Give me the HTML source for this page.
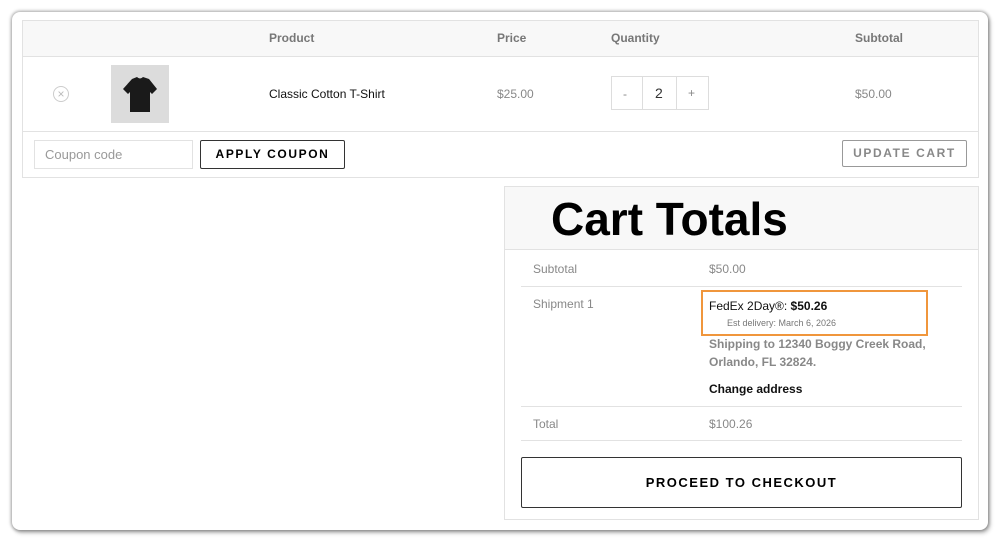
<!DOCTYPE html><html><head><style>
body{margin:0;width:1000px;height:541px;background:#fff;font-family:"Liberation Sans",sans-serif;position:relative;overflow:hidden}
.a{position:absolute}
.card{left:12px;top:12px;width:976px;height:518px;background:#fff;border-radius:8px;box-shadow:0 0 3px 1px rgba(0,0,0,.35),2px 3px 4px rgba(0,0,0,.25)}
.g{color:#888;font-size:12px}
.h{color:#777;font-size:12px;font-weight:bold}
</style></head><body>
<div class="a card"></div>
<div class="a" style="left:22px;top:20px;width:955px;height:156px;border:1px solid #e2e2e2"></div>
<div class="a" style="left:23px;top:21px;width:955px;height:35px;background:#f8f8f8;border-bottom:1px solid #e2e2e2"></div>
<div class="a h" style="left:269px;top:31px">Product</div>
<div class="a h" style="left:497px;top:31px">Price</div>
<div class="a h" style="left:611px;top:31px">Quantity</div>
<div class="a h" style="left:855px;top:31px">Subtotal</div>
<div class="a" style="left:23px;top:131px;width:955px;border-top:1px solid #e2e2e2"></div>
<div class="a" style="left:53px;top:86px;width:14px;height:14px;border:1px solid #ccc;border-radius:50%;color:#bbb;font-size:12px;line-height:14px;text-align:center">×</div>
<div class="a" style="left:111px;top:65px;width:58px;height:58px;background:#dcdcdc"><svg width="58" height="58"><path d="M21 14 L26 12 Q29 15 32 12 L38 14 L46 24 L41 29 L39 27 L39 47 L19 47 L19 27 L17 29 L12 24 Z" fill="#1a1a1a"/></svg></div>
<div class="a" style="left:269px;top:87px;font-size:12px;color:#111">Classic Cotton T-Shirt</div>
<div class="a g" style="left:497px;top:87px">$25.00</div>
<div class="a" style="left:611px;top:76px;width:96px;height:32px;border:1px solid #ddd"></div>
<div class="a" style="left:642px;top:77px;width:33px;height:32px;border-left:1px solid #ddd;border-right:1px solid #ddd"></div>
<div class="a g" style="left:623px;top:87px">-</div>
<div class="a" style="left:655px;top:85px;font-size:14px;color:#333">2</div>
<div class="a g" style="left:688px;top:86px">+</div>
<div class="a g" style="left:855px;top:87px">$50.00</div>
<div class="a" style="left:34px;top:140px;width:157px;height:27px;border:1px solid #e2e2e2"></div>
<div class="a" style="left:45px;top:147px;color:#999;font-size:13px">Coupon code</div>
<div class="a" style="left:200px;top:140px;width:143px;height:27px;border:1px solid #333;border-radius:2px;text-align:center;line-height:27px;font-size:12px;font-weight:bold;letter-spacing:1.6px">APPLY COUPON</div>
<div class="a" style="left:842px;top:140px;width:123px;height:25px;border:1px solid #999;border-radius:2px;text-align:center;line-height:25px;font-size:12px;font-weight:bold;letter-spacing:1.6px;color:#888">UPDATE CART</div>
<div class="a" style="left:504px;top:186px;width:473px;height:332px;border:1px solid #e2e2e2"></div>
<div class="a" style="left:505px;top:187px;width:473px;height:62px;background:#f8f8f8;border-bottom:1px solid #e2e2e2"></div>
<div class="a" style="left:551px;top:192px;font-size:46px;font-weight:bold;color:#000">Cart Totals</div>
<div class="a g" style="left:533px;top:262px">Subtotal</div>
<div class="a g" style="left:709px;top:262px">$50.00</div>
<div class="a" style="left:521px;top:286px;width:441px;border-top:1px solid #e2e2e2"></div>
<div class="a g" style="left:533px;top:297px">Shipment 1</div>
<div class="a" style="left:701px;top:290px;width:223px;height:42px;border:2px solid #f0963c"></div>
<div class="a" style="left:709px;top:299px;font-size:12px;color:#111">FedEx 2Day®: <b>$50.26</b></div>
<div class="a" style="left:727px;top:318px;font-size:9px;color:#777">Est delivery: March 6, 2026</div>
<div class="a" style="left:709px;top:336px;font-size:12px;font-weight:bold;color:#888;line-height:17.5px">Shipping to 12340 Boggy Creek Road,<br>Orlando, FL 32824.</div>
<div class="a" style="left:709px;top:382px;font-size:12px;font-weight:bold;color:#111">Change address</div>
<div class="a" style="left:521px;top:406px;width:441px;border-top:1px solid #e2e2e2"></div>
<div class="a g" style="left:533px;top:417px">Total</div>
<div class="a g" style="left:709px;top:417px">$100.26</div>
<div class="a" style="left:521px;top:440px;width:441px;border-top:1px solid #e2e2e2"></div>
<div class="a" style="left:521px;top:457px;width:439px;height:49px;border:1px solid #333;border-radius:2px;text-align:center;line-height:49px;font-size:13px;font-weight:bold;letter-spacing:1.5px">PROCEED TO CHECKOUT</div>
</body></html>
